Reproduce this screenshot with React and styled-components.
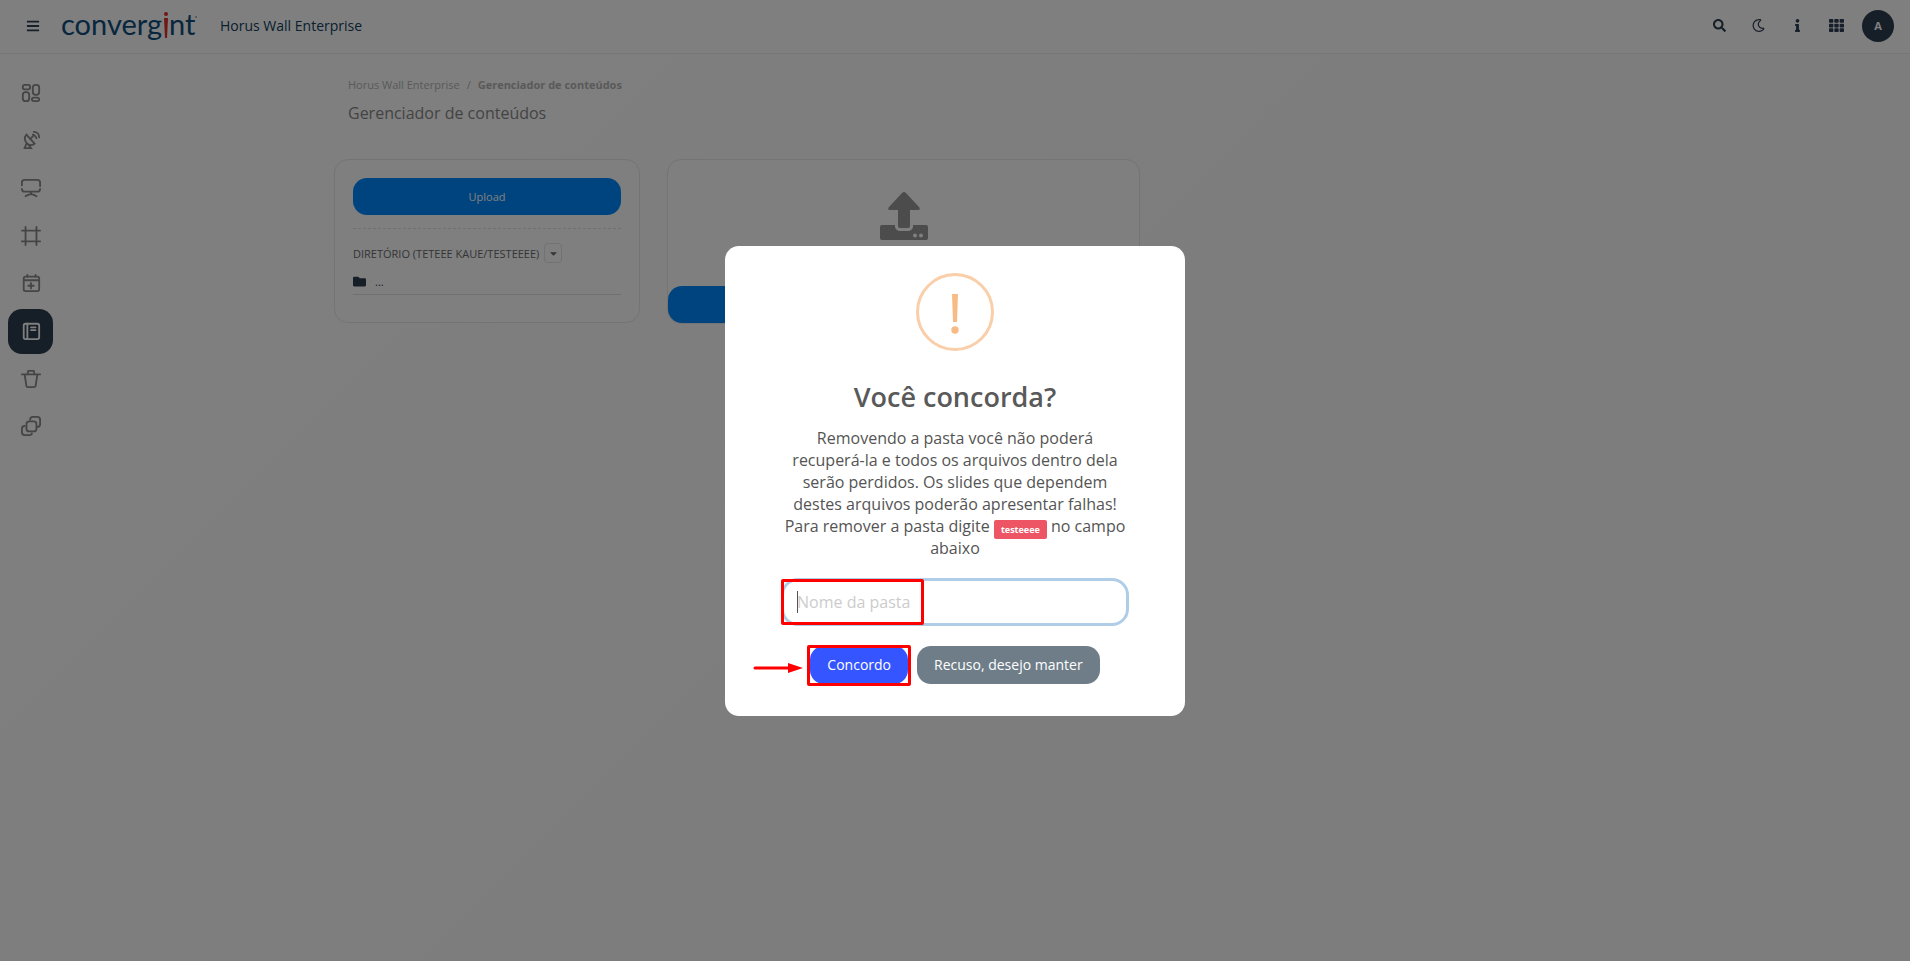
import { createGlobalStyle, styled } from 'styled-components';
import {
  FaBars,
  FaSearch,
  FaInfo,
  FaTh,
  FaCaretDown,
  FaFolder,
  FaRegMoon,
} from 'react-icons/fa';

const GlobalStyle = createGlobalStyle`
  * {
    box-sizing: border-box;
  }

  body {
    margin: 0;
    background: #fefefe linear-gradient(135deg, #fefefe 20%, #fafafc 60%);
    background-attachment: fixed;
    color: #545454;
    font-family: 'Open Sans', 'Noto Sans', sans-serif;
    font-size: 11px;
  }

  button,
  input {
    font-family: inherit;
  }
`;

const menu = [
  {
    label: 'Painel',
    icon: (
      <>
        <rect x="1" y="1" width="8" height="5" rx="2" />
        <rect x="12" y="1" width="7" height="11" rx="3" />
        <rect x="1" y="9" width="7" height="10" rx="3" />
        <rect x="11" y="15" width="8" height="4" rx="2" />
      </>
    ),
  },
  {
    label: 'Transmissão',
    icon: (
      <>
        <path d="M5 4c-3 3-2 8 1 10 3 2 6 2 8 0zM5 14l-2 5h7l-3-4M9 9l3-3M12 4c2 0 3 2 4 4M13 1c4 0 6 3 6 6" />
      </>
    ),
  },
  {
    label: 'Monitores',
    icon: (
      <>
        <path d="M0 7V4q0-3 3-3h14q3 0 3 3v4M20 11q0 3-3 3H3q-3 0-3-3M10 14v3M4 19l4-2h4l4 2" />
      </>
    ),
  },
  {
    label: 'Layouts',
    icon: <path d="M4 0v20M16 0v20M0 4h20M0 16h20" />,
  },
  {
    label: 'Agenda',
    icon: (
      <>
        <rect x="2" y="3" width="17" height="16" rx="2" />
        <path d="M2 7h17M6 1v2M15 1v2M10 10v6M7 13h6" />
      </>
    ),
  },
  {
    label: 'Conteúdos',
    active: true,
    icon: (
      <>
        <rect x="2" y="2" width="17" height="17" rx="2" />
        <path d="M6 2v17M10 6h5M10 9h5" />
      </>
    ),
  },
  {
    label: 'Lixeira',
    icon: <path d="M0 5h20M6 5l1-4h6l1 4M3 5l2 13q0 1 2 1h6q2 0 2-1l2-13" />,
  },
  {
    label: 'Modelos',
    icon: (
      <>
        <rect x="5" y="5" width="11" height="11" rx="3" />
        <path d="M9 3q0-3 3-3h5q3 0 3 3v5q0 3-3 3M3 10q-3 0-3 3v4q0 3 3 3h5q3 0 3-2" />
      </>
    ),
  },
];

const Logo = () => (
  <svg width="136" height="44" viewBox="0 0 136 44" role="img" aria-label="convergint">
    <g fill="#104e7c" fontFamily="Lato, sans-serif" fontSize="29">
      <text x="-1" y="31">converg</text>
      <text x="107" y="31">nt</text>
    </g>
    <circle cx="104" cy="10" r="2" fill="#e02f2f" />
    <path d="M102 14h4l-1 20h-2z" fill="#e02f2f" />
    <circle cx="134" cy="13" r="1" fill="#88a6bd" />
  </svg>
);

const App = () => {
  return (
    <>
      <GlobalStyle />
      <Header>
        <IconButton aria-label="Menu">
          <FaBars size={14} />
        </IconButton>
        <Brand href="#">
          <Logo />
        </Brand>
        <AppName>Horus Wall Enterprise</AppName>
        <Actions>
          <IconButton aria-label="Buscar">
            <FaSearch size={13} />
          </IconButton>
          <IconButton aria-label="Tema">
            <FaRegMoon size={13} />
          </IconButton>
          <IconButton aria-label="Informações">
            <FaInfo size={13} />
          </IconButton>
          <IconButton aria-label="Aplicativos">
            <FaTh size={15} />
          </IconButton>
          <Avatar>A</Avatar>
        </Actions>
      </Header>

      <Body>
        <Sidebar>
          {menu.map((item) => (
            <MenuLink
              href="#"
              key={item.label}
              aria-label={item.label}
              $active={item.active}
            >
              <svg width="20" height="20" viewBox="-1 -1 22 22">
                {item.icon}
              </svg>
            </MenuLink>
          ))}
        </Sidebar>

        <Content>
          <Breadcrumb>
            <a href="#">Horus Wall Enterprise</a>
            <span>/</span>
            <strong>Gerenciador de conteúdos</strong>
          </Breadcrumb>
          <PageTitle>Gerenciador de conteúdos</PageTitle>
          <Panels>
            <Card>
              <UploadButton>Upload</UploadButton>
              <Divider />
              <Directory>
                DIRETÓRIO (TETEEE KAUE/TESTEEEE)
                <DropButton aria-label="Opções do diretório">
                  <FaCaretDown size={11} />
                </DropButton>
              </Directory>
              <Folder href="#">
                <FaFolder size={13} />
                <span>...</span>
              </Folder>
            </Card>
            <DropZone>
              <DropArea>
                <svg width="48" height="48" viewBox="0 0 48 48" fill="#989898">
                  <path d="M22 1q2-2 4 0l13 14q2 3-1 3h-8v16q0 2-2 2h-8q-2 0-2-2V18h-8q-3 0-1-3z" />
                  <path
                    fillRule="evenodd"
                    d="M2 33h13v2q1 4 5 4h8q4 0 5-4v-2h13q2 0 2 2v11q0 2-2 2H2q-2 0-2-2V35q0-2 2-2zM33 43.500a2 2 0 1 0 4 0a2 2 0 1 0-4 0zM39 43.500a2 2 0 1 0 4 0a2 2 0 1 0-4 0z"
                  />
                </svg>
              </DropArea>
              <UploadButton aria-label="Enviar arquivos" />
            </DropZone>
          </Panels>
        </Content>
      </Body>

      <Overlay>
        <Modal role="dialog" aria-labelledby="modal-title">
          <WarningIcon viewBox="0 0 78 78" aria-hidden="true">
            <circle cx="39" cy="39" r="37.500" fill="none" stroke="#facea8" strokeWidth="3" />
            <path d="M36 21h6l-1 28h-4z" />
            <circle cx="39" cy="57" r="3.700" />
          </WarningIcon>
          <ModalTitle id="modal-title">Você concorda?</ModalTitle>
          <ModalText>
            Removendo a pasta você não poderá recuperá-la e todos os arquivos
            dentro dela serão perdidos. Os slides que dependem destes arquivos
            poderão apresentar falhas! Para remover a pasta digite{' '}
            <Badge>testeeee</Badge> no campo abaixo
          </ModalText>
          <Field>
            <FolderInput aria-label="Nome da pasta" placeholder="Nome da pasta" />
            <Caret />
            <InputMark />
          </Field>
          <ModalActions>
            <Marked>
              <ModalButton $color="#3455ff">Concordo</ModalButton>
              <ButtonMark />
              <Arrow viewBox="0 0 50 10" aria-hidden="true">
                <path d="M2 5h34" stroke="#f00" strokeWidth="3" strokeLinecap="round" />
                <path d="M35 0l15 5-15 5z" fill="#f00" />
              </Arrow>
            </Marked>
            <ModalButton $color="#6e7d88">Recuso, desejo manter</ModalButton>
          </ModalActions>
        </Modal>
      </Overlay>
    </>
  );
};

const Header = styled.header`
  display: flex;
  align-items: center;
  height: 54px;
  padding: 0 16px 2px 20px;
  border-bottom: 1px solid #ececf0;
  background: #fefefe;
`;

const IconButton = styled.button`
  display: flex;
  align-items: center;
  justify-content: center;
  width: 26px;
  height: 32px;
  padding: 0;
  border: 0;
  background: none;
  color: #2c3f54;
`;

const Brand = styled.a`
  display: flex;
  margin-left: 16px;
`;

const AppName = styled.span`
  margin-left: 22px;
  color: #104060;
  font-size: 14px;
`;

const Actions = styled.div`
  display: flex;
  align-items: center;
  gap: 13px;
  margin-left: auto;
`;

const Avatar = styled.button`
  width: 32px;
  height: 32px;
  padding: 0;
  border: 0;
  border-radius: 50%;
  background: #2c3e50;
  color: #fff;
  font-size: 11px;
  font-weight: 700;
`;

const Body = styled.div`
  display: flex;
  align-items: flex-start;
`;

const Sidebar = styled.nav`
  display: flex;
  flex-direction: column;
  justify-content: space-between;
  height: 410px;
  padding: 16px 8px 15px;
`;

const MenuLink = styled.a`
  display: flex;
  align-items: center;
  justify-content: center;
  width: 45px;
  height: 45px;
  border-radius: 14px;
  background: ${({ $active }) => ($active ? '#2c3e50' : 'none')};

  svg {
    fill: none;
    stroke: ${({ $active }) => ($active ? '#fff' : '#8a8a8a')};
    stroke-width: 2;
    stroke-linecap: round;
  }
`;

const Content = styled.main`
  flex: 1;
  max-width: 1090px;
  margin-left: 273px;
  padding: 22px 10px;
`;

const Breadcrumb = styled.nav`
  display: flex;
  gap: 7px;
  padding-left: 4px;
  color: #b4b4b4;
  line-height: 18px;

  a {
    color: inherit;
    text-decoration: none;
  }
`;

const PageTitle = styled.h1`
  margin: 7px 0 33px;
  padding-left: 4px;
  color: #888;
  font-size: 16px;
  font-weight: 400;
  line-height: 25px;
`;

const Panels = styled.div`
  display: flex;
  align-items: flex-start;
  gap: 27px;
  margin-left: -10px;
`;

const Card = styled.section`
  width: 306px;
  padding: 18px 18px 27px;
  border: 1px solid #e8e8ea;
  border-radius: 14px;
  background: #fefefe;
`;

const UploadButton = styled.button`
  display: block;
  width: 100%;
  height: 37px;
  border: 0;
  border-radius: 14px;
  background: #0088fe;
  color: #fff;
  font-size: 11px;
`;

const Divider = styled.hr`
  margin: 13px 0 14px;
  border: 0;
  border-top: 1px dashed #e0e0e0;
`;

const Directory = styled.div`
  display: flex;
  align-items: center;
  gap: 5px;
  color: #676a6c;
`;

const DropButton = styled.button`
  display: flex;
  align-items: center;
  justify-content: center;
  width: 18px;
  height: 20px;
  padding: 0;
  border: 1px solid #e4e4e6;
  border-radius: 4px;
  background: none;
  color: #676a6c;
`;

const Folder = styled.a`
  display: flex;
  align-items: center;
  gap: 9px;
  height: 32px;
  padding-top: 5px;
  border-bottom: 1px solid #e0e0e2;
  color: #2c3e50;
  text-decoration: none;
`;

const DropZone = styled.section`
  width: 473px;
  border: 1px solid #e8e8ea;
  border-radius: 14px;
  background: #fefefe;
`;

const DropArea = styled.div`
  display: flex;
  justify-content: center;
  height: 126px;
  padding-top: 32px;
`;

const Overlay = styled.div`
  position: fixed;
  inset: 0;
  display: flex;
  align-items: center;
  justify-content: center;
  background: rgba(0, 0, 0, 0.5);
`;

const Modal = styled.section`
  display: flex;
  flex-direction: column;
  align-items: center;
  width: 460px;
  padding: 27px 56px 32px;
  border-radius: 14px;
  background: #fff;
`;

const WarningIcon = styled.svg`
  width: 78px;
  height: 78px;
  fill: #f8bb86;
`;

const ModalTitle = styled.h2`
  margin: 27px 0 11px;
  color: #595959;
  font-size: 27px;
  font-weight: 600;
  line-height: 38px;
`;

const ModalText = styled.p`
  margin: 0;
  color: #545454;
  font-size: 16px;
  line-height: 22px;
  text-align: center;
`;

const Badge = styled.span`
  padding: 3px 7px;
  border-radius: 2px;
  background: #ed5565;
  color: #fff;
  font-size: 9px;
  font-weight: 700;
  line-height: 1;
  vertical-align: -1px;
`;

const Field = styled.div`
  position: relative;
  align-self: stretch;
  margin-top: 19px;
`;

const FolderInput = styled.input`
  width: 100%;
  height: 48px;
  padding: 0 13px;
  border: 3px solid #b0cde7;
  border-radius: 17px;
  outline: 0;
  background: #fff;
  color: #545454;
  font-size: 16px;

  &::placeholder {
    color: #ccc;
  }
`;

const Caret = styled.span`
  position: absolute;
  top: 13px;
  left: 16px;
  width: 1px;
  height: 22px;
  background: #545454;
`;

const InputMark = styled.span`
  position: absolute;
  top: 1px;
  left: 0;
  width: 143px;
  height: 46px;
  border: 3px solid #f00;
  border-radius: 2px;
  pointer-events: none;
`;

const ModalActions = styled.div`
  display: flex;
  gap: 9px;
  margin-top: 20px;
`;

const Marked = styled.div`
  position: relative;
`;

const ModalButton = styled.button`
  height: 38px;
  padding: 0 17px;
  border: 0;
  border-radius: 14px;
  background: ${({ $color }) => $color};
  color: #fff;
  font-size: 14px;
`;

const ButtonMark = styled.span`
  position: absolute;
  inset: -1px -3px -2px;
  border: 3px solid #f00;
  border-radius: 2px;
  pointer-events: none;
`;

const Arrow = styled.svg`
  position: absolute;
  top: 17px;
  right: calc(100% + 7px);
  width: 50px;
  height: 10px;
`;

export default App;
